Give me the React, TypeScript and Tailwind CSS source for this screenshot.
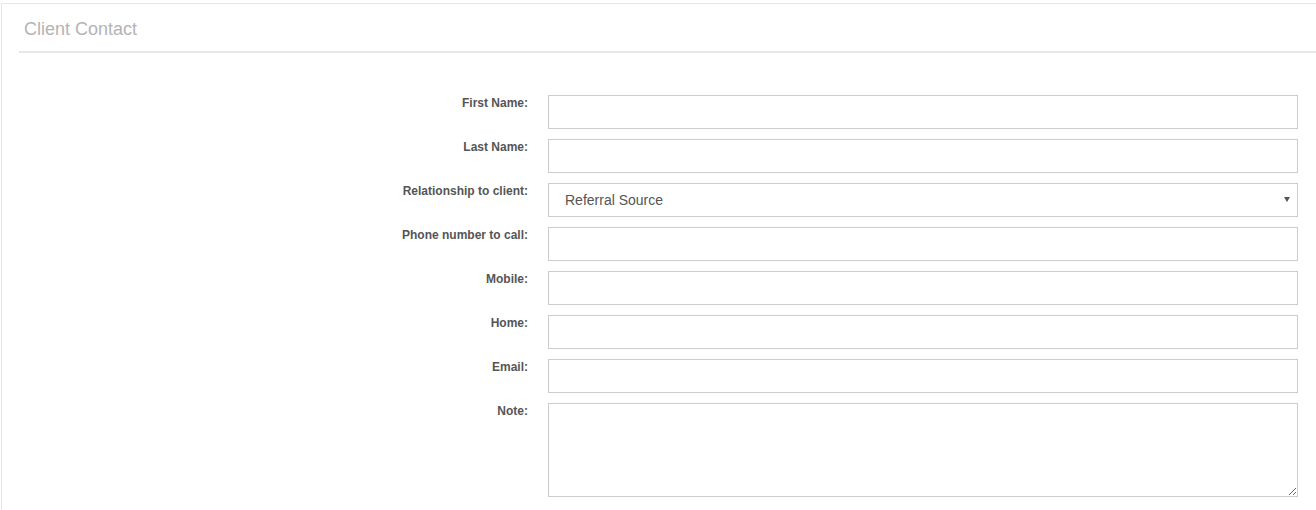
import React from 'react';

const fields = [
  { label: 'First Name:', kind: 'input' },
  { label: 'Last Name:', kind: 'input' },
  { label: 'Relationship to client:', kind: 'select' },
  { label: 'Phone number to call:', kind: 'input' },
  { label: 'Mobile:', kind: 'input' },
  { label: 'Home:', kind: 'input' },
  { label: 'Email:', kind: 'input' },
  { label: 'Note:', kind: 'textarea' },
];

export default function App() {
  return (
    <div
      className="h-[510px] w-[1316px] overflow-hidden bg-white pl-px pt-[3px]"
      style={{ fontFamily: '"Liberation Sans", Arial, sans-serif' }}
    >
      <div className="w-[1340px] border-l border-t border-[#e6e6e6] bg-white pb-10">
        <div className="ml-[17px] border-b-2 border-[#e4e7ea] pb-[12px] pl-[5px] pt-[15px]">
          <h2 className="text-[18px] leading-[20px] font-normal text-[#b4b4b4]">Client Contact</h2>
        </div>

        <form className="flex flex-col gap-[10px] pt-[42px]">
          {fields.map(({ label, kind }) => (
            <div key={label} className="flex items-start">
              <label className="w-[526px] pt-px text-right text-[12px] leading-[14px] font-bold text-[#555]">
                {label}
              </label>
              <div className="relative ml-[20px] w-[750px]">
                {kind === 'input' && (
                  <input
                    type="text"
                    className="block h-[34px] w-full border border-[#ccc] bg-white px-3 text-[14px] text-[#555] outline-none"
                  />
                )}
                {kind === 'select' && (
                  <>
                    <select
                      defaultValue="Referral Source"
                      className="block h-[34px] w-full appearance-none border border-[#ccc] bg-white pl-4 text-[14px] text-[#555] outline-none"
                    >
                      <option>Referral Source</option>
                      <option>Family Member</option>
                      <option>Friend</option>
                    </select>
                    <svg
                      className="pointer-events-none absolute right-[8px] top-[14px]"
                      width="6"
                      height="5"
                      viewBox="0 0 6 5"
                      aria-hidden
                    >
                      <path d="M0 0h6L3 5z" fill="#555" />
                    </svg>
                  </>
                )}
                {kind === 'textarea' && (
                  <textarea className="block h-[94px] w-full border border-[#ccc] bg-white px-3 py-2 text-[14px] text-[#555] outline-none" />
                )}
              </div>
            </div>
          ))}
        </form>
      </div>
    </div>
  );
}
